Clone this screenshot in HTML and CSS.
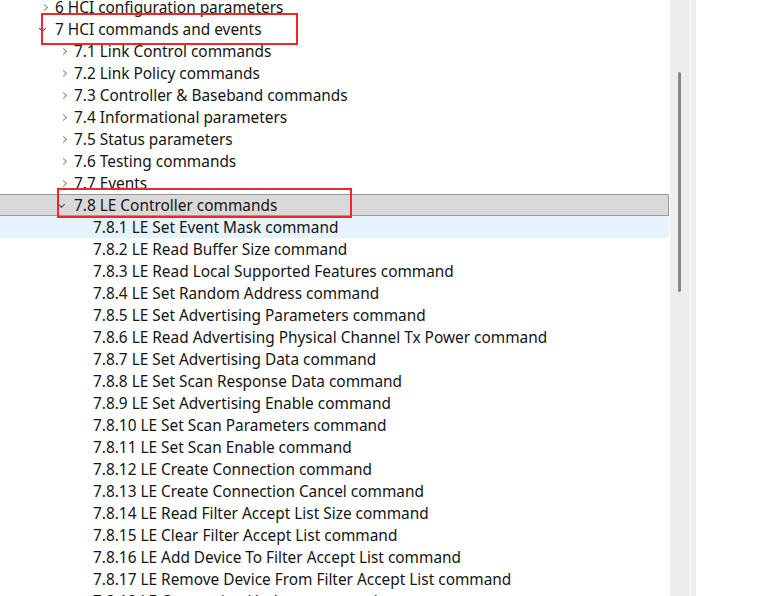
FILE: index.html
```html
<!DOCTYPE html>
<html lang="en">
<head>
    <meta charset="UTF-8">
    <title>HCI commands</title>
    <link rel="stylesheet" href="styles.css">
</head>
<body>
    <div class="pane">
        <ul class="tree">
            <li class="row l0"><span class="chev right"></span><span class="label">6 HCI configuration parameters</span></li>
            <li class="row l0"><span class="chev down"></span><span class="label">7 HCI commands and events</span></li>
            <li class="row l1"><span class="chev right"></span><span class="label">7.1 Link Control commands</span></li>
            <li class="row l1"><span class="chev right"></span><span class="label">7.2 Link Policy commands</span></li>
            <li class="row l1"><span class="chev right"></span><span class="label">7.3 Controller &amp; Baseband commands</span></li>
            <li class="row l1"><span class="chev right"></span><span class="label">7.4 Informational parameters</span></li>
            <li class="row l1"><span class="chev right"></span><span class="label">7.5 Status parameters</span></li>
            <li class="row l1"><span class="chev right"></span><span class="label">7.6 Testing commands</span></li>
            <li class="row l1"><span class="chev right"></span><span class="label">7.7 Events</span></li>
            <li class="row l1 selected"><span class="chev down"></span><span class="label">7.8 LE Controller commands</span></li>
            <li class="row l2 hover"><span class="label">7.8.1 LE Set Event Mask command</span></li>
            <li class="row l2"><span class="label">7.8.2 LE Read Buffer Size command</span></li>
            <li class="row l2"><span class="label">7.8.3 LE Read Local Supported Features command</span></li>
            <li class="row l2"><span class="label">7.8.4 LE Set Random Address command</span></li>
            <li class="row l2"><span class="label">7.8.5 LE Set Advertising Parameters command</span></li>
            <li class="row l2"><span class="label">7.8.6 LE Read Advertising Physical Channel Tx Power command</span></li>
            <li class="row l2"><span class="label">7.8.7 LE Set Advertising Data command</span></li>
            <li class="row l2"><span class="label">7.8.8 LE Set Scan Response Data command</span></li>
            <li class="row l2"><span class="label">7.8.9 LE Set Advertising Enable command</span></li>
            <li class="row l2"><span class="label">7.8.10 LE Set Scan Parameters command</span></li>
            <li class="row l2"><span class="label">7.8.11 LE Set Scan Enable command</span></li>
            <li class="row l2"><span class="label">7.8.12 LE Create Connection command</span></li>
            <li class="row l2"><span class="label">7.8.13 LE Create Connection Cancel command</span></li>
            <li class="row l2"><span class="label">7.8.14 LE Read Filter Accept List Size command</span></li>
            <li class="row l2"><span class="label">7.8.15 LE Clear Filter Accept List command</span></li>
            <li class="row l2"><span class="label">7.8.16 LE Add Device To Filter Accept List command</span></li>
            <li class="row l2"><span class="label">7.8.17 LE Remove Device From Filter Accept List command</span></li>
            <li class="row l2"><span class="label">7.8.18 LE Connection Update command</span></li>
        </ul>
        <div class="mark mark-top"></div>
        <div class="mark mark-le"></div>
    </div>
    <div class="scrollbar"><div class="thumb"></div></div>
    <div class="divider"></div>
    <div class="strip"></div>
    <div class="rest"></div>
</body>
</html>
```

FILE: styles.css
```css
/* Reset */
* {
    margin: 0;
    padding: 0;
    box-sizing: border-box;
}
html, body {
    height: 100%;
}
body {
    display: flex;
    font-family: "Noto Sans", "Open Sans", sans-serif;
    font-size: 15.4px;
    color: #141414;
    background: #fff;
    overflow: hidden;
}

/* Tree pane */
.pane {
    position: relative;
    width: 670px;
    flex: none;
    overflow: hidden;
}
.tree {
    list-style: none;
    margin-top: -4px;
    margin-right: 1px;
}
.row {
    display: flex;
    align-items: center;
    height: 22px;
    white-space: nowrap;
}
.l0 { padding-left: 42px; }
.l1 { padding-left: 61px; }
.l2 { padding-left: 93px; }
.chev {
    width: 13px;
    height: 22px;
    flex: none;
    position: relative;
}
.chev.right::before {
    content: '';
    position: absolute;
    left: 0;
    top: 9px;
    width: 4px;
    height: 4px;
    border-right: 1px solid #8a8a8a;
    border-bottom: 1px solid #8a8a8a;
    transform: rotate(-45deg);
}
.chev.down::before {
    content: '';
    position: absolute;
    left: -2px;
    top: 8px;
    width: 4px;
    height: 4px;
    border-right: 1px solid #444;
    border-bottom: 1px solid #444;
    transform: rotate(45deg);
}
.label {
    line-height: 20px;
    padding-top: 2px;
}
.row.selected {
    background: #d9d9d9;
    border: 1px solid #999;
    border-left: none;
}
.row.hover {
    background: #e5f3fe;
    border-radius: 0 3px 3px 0;
}

/* Red annotation boxes */
.mark {
    position: absolute;
    border: 2px solid #f0262b;
}
.mark-top {
    left: 41px;
    top: 13px;
    width: 257px;
    height: 32px;
}
.mark-le {
    left: 57px;
    top: 188px;
    width: 295px;
    height: 30px;
}

/* Scrollbar and side strips */
.scrollbar {
    width: 20px;
    flex: none;
    background: #eeeeee;
    padding: 72px 0 0 8px;
}
.thumb {
    width: 3px;
    height: 220px;
    background: #888;
    border-radius: 2px;
}
.divider {
    width: 1px;
    flex: none;
    background: #fff;
}
.strip {
    width: 5px;
    flex: none;
    background: #ededed;
}
.rest {
    flex: 1;
}
```
